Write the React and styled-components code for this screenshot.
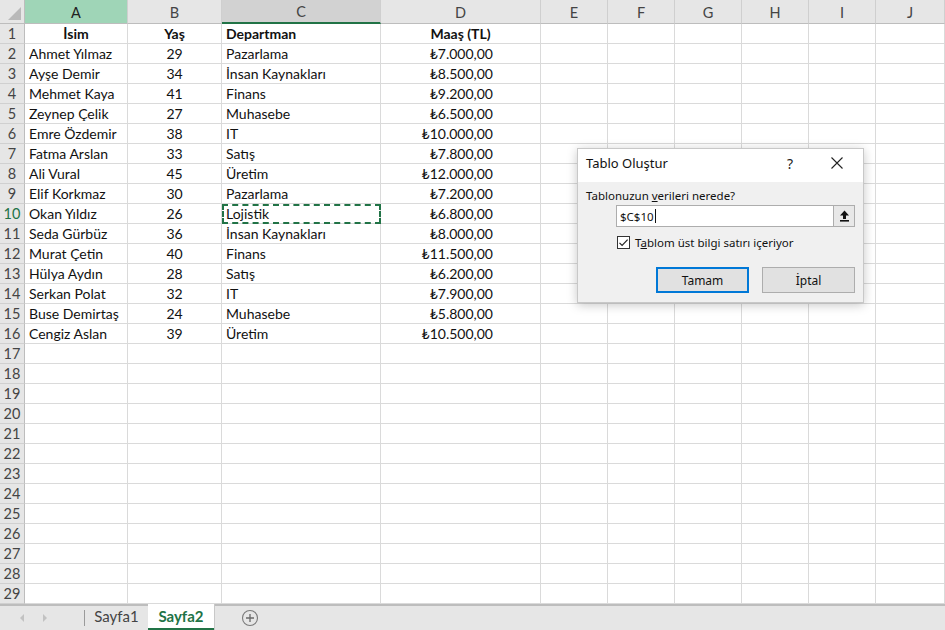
import React from 'react';
import styled, { createGlobalStyle, css } from 'styled-components';

const GlobalStyle = createGlobalStyle`
  html, body {
    margin: 0;
    padding: 0;
    overflow: hidden;
    background: #ffffff;
  }
  * {
    box-sizing: border-box;
  }
`;

const COLS = ['A', 'B', 'C', 'D', 'E', 'F', 'G', 'H', 'I', 'J'];

const rows = [
  ['İsim', 'Yaş', 'Departman', 'Maaş (TL)'],
  ['Ahmet Yılmaz', '29', 'Pazarlama', '₺7.000,00'],
  ['Ayşe Demir', '34', 'İnsan Kaynakları', '₺8.500,00'],
  ['Mehmet Kaya', '41', 'Finans', '₺9.200,00'],
  ['Zeynep Çelik', '27', 'Muhasebe', '₺6.500,00'],
  ['Emre Özdemir', '38', 'IT', '₺10.000,00'],
  ['Fatma Arslan', '33', 'Satış', '₺7.800,00'],
  ['Ali Vural', '45', 'Üretim', '₺12.000,00'],
  ['Elif Korkmaz', '30', 'Pazarlama', '₺7.200,00'],
  ['Okan Yıldız', '26', 'Lojistik', '₺6.800,00'],
  ['Seda Gürbüz', '36', 'İnsan Kaynakları', '₺8.000,00'],
  ['Murat Çetin', '40', 'Finans', '₺11.500,00'],
  ['Hülya Aydın', '28', 'Satış', '₺6.200,00'],
  ['Serkan Polat', '32', 'IT', '₺7.900,00'],
  ['Buse Demirtaş', '24', 'Muhasebe', '₺5.800,00'],
  ['Cengiz Aslan', '39', 'Üretim', '₺10.500,00'],
];

const TOTAL_ROWS = 29;

const App = () => {
  const body = [];
  for (let r = 1; r <= TOTAL_ROWS; r++) {
    const data = rows[r - 1] || [];
    body.push(
      <RowHead key={`h${r}`} active={r === 10}>
        {r}
      </RowHead>
    );
    COLS.forEach((c, i) => {
      const value = data[i] || '';
      const header = r === 1;
      let align = 'left';
      if (i === 1) align = 'center';
      if (i === 0 && header) align = 'center';
      if (i === 3) align = header ? 'center' : 'right';
      body.push(
        <Cell
          key={`${c}${r}`}
          align={align}
          bold={header}
          marked={r === 10 && c === 'C'}
        >
          {value}
        </Cell>
      );
    });
  }

  return (
    <>
      <GlobalStyle />
      <Window>
        <Sheet>
          <Corner>
            <CornerTriangle />
          </Corner>
          {COLS.map((c) => (
            <ColHead key={c} state={c === 'A' ? 'picked' : c === 'C' ? 'active' : ''}>
              {c}
            </ColHead>
          ))}
          {body}
        </Sheet>

        <TabBar>
          <NavArrows>
            <Arrow dir="left" />
            <Arrow dir="right" />
          </NavArrows>
          <TabDivider />
          <Tab>Sayfa1</Tab>
          <Tab active>Sayfa2</Tab>
          <AddSheet>
            <svg width="18" height="18" viewBox="0 0 18 18">
              <circle cx="9" cy="9" r="7.5" fill="none" stroke="#7a7a7a" strokeWidth="1.1" />
              <path d="M9 5v8M5 9h8" stroke="#6a6a6a" strokeWidth="1.3" />
            </svg>
          </AddSheet>
        </TabBar>

        <Dialog>
          <TitleBar>
            <Title>Tablo Oluştur</Title>
            <TitleActions>
              <Help>?</Help>
              <svg width="12" height="12" viewBox="0 0 12 12">
                <path d="M0.5 0.5l11 11M11.5 0.5l-11 11" stroke="#222" strokeWidth="1.1" />
              </svg>
            </TitleActions>
          </TitleBar>
          <DialogBody>
            <Label>
              Tablonuzun <u>v</u>erileri nerede?
            </Label>
            <RangeField>
              <RangeInput>
                $C$10<Caret />
              </RangeInput>
              <CollapseBtn>
                <svg width="11" height="12" viewBox="0 0 11 12">
                  <path d="M5.5 0.5L10 5.5H7V9H4V5.5H1z" fill="#111" />
                  <rect x="1" y="10" width="9" height="1.6" fill="#111" />
                </svg>
              </CollapseBtn>
            </RangeField>
            <CheckRow>
              <CheckBox>
                <svg width="11" height="11" viewBox="0 0 11 11">
                  <path d="M1.5 5.8l2.6 2.6L9.6 2.6" fill="none" stroke="#222" strokeWidth="1.2" />
                </svg>
              </CheckBox>
              <span>
                T<u>a</u>blom üst bilgi satırı içeriyor
              </span>
            </CheckRow>
            <ButtonRow>
              <DialogButton primary>Tamam</DialogButton>
              <DialogButton>İptal</DialogButton>
            </ButtonRow>
          </DialogBody>
        </Dialog>
      </Window>
    </>
  );
};

export default App;

const sheetFont = `'Lato', 'DejaVu Sans', sans-serif`;
const uiFont = `'Noto Sans', 'DejaVu Sans', sans-serif`;

const Window = styled.div`
  position: relative;
  width: 945px;
  height: 630px;
  overflow: hidden;
  display: flex;
  flex-direction: column;
  background: #ffffff;
`;

const Sheet = styled.div`
  display: grid;
  grid-template-columns: 25px 103px 94px 159px 160px 67px 67px 67px 67px 67px 69px;
  grid-template-rows: 24px;
  grid-auto-rows: 20px;
  font-family: ${sheetFont};
`;

const Corner = styled.div`
  position: relative;
  background: #e6e6e6;
  border-right: 1px solid #bdbdbd;
  border-bottom: 1px solid #bdbdbd;
`;

const CornerTriangle = styled.div`
  position: absolute;
  right: 3px;
  bottom: 3px;
  width: 0;
  height: 0;
  border-left: 13px solid transparent;
  border-bottom: 13px solid #b9b9b9;
`;

const ColHead = styled.div`
  display: flex;
  align-items: center;
  justify-content: center;
  background: #e6e6e6;
  color: #444;
  font-size: 14.5px;
  border-right: 1px solid #cfcfcf;
  border-bottom: 1px solid #bdbdbd;
  padding-top: 1px;
  ${({ state }) =>
    state === 'picked' &&
    css`
      background: #9fd5b7;
      color: #222;
    `}
  ${({ state }) =>
    state === 'active' &&
    css`
      background: #d2d2d2;
      border-bottom: 2px solid #217346;
    `}
`;

const RowHead = styled.div`
  display: flex;
  align-items: center;
  justify-content: center;
  background: #e6e6e6;
  color: ${({ active }) => (active ? '#217346' : '#444')};
  font-size: 14.5px;
  border-right: 1px solid #bdbdbd;
  border-bottom: 1px solid #d0d0d0;
`;

const Cell = styled.div`
  position: relative;
  display: flex;
  align-items: center;
  justify-content: ${({ align }) =>
    align === 'center' ? 'center' : align === 'right' ? 'flex-end' : 'flex-start'};
  padding: 0 ${({ align }) => (align === 'right' ? '47px' : '4px')} 0 4px;
  border-right: 1px solid #dadada;
  border-bottom: 1px solid #dadada;
  font-size: 14px;
  font-weight: ${({ bold }) => (bold ? 700 : 400)};
  color: #111;
  white-space: nowrap;
  ${({ marked }) =>
    marked &&
    css`
      outline: 2px dashed #217346;
      outline-offset: -2px;
    `}
`;

const TabBar = styled.div`
  flex: 1;
  display: flex;
  align-items: stretch;
  background: #e6e6e6;
  border-top: 2px solid #bdbdbd;
  font-family: ${sheetFont};
`;

const NavArrows = styled.div`
  display: flex;
  align-items: center;
  gap: 19px;
  padding-left: 20px;
  width: 84px;
`;

const Arrow = styled.span`
  width: 0;
  height: 0;
  border-top: 4px solid transparent;
  border-bottom: 4px solid transparent;
  ${({ dir }) =>
    dir === 'left'
      ? css`
          border-right: 4px solid #c2c2c2;
        `
      : css`
          border-left: 4px solid #c2c2c2;
        `}
`;

const TabDivider = styled.div`
  width: 1px;
  margin: 4px 0 4px;
  background: #9a9a9a;
`;

const Tab = styled.div`
  display: flex;
  align-items: center;
  justify-content: center;
  width: ${({ active }) => (active ? '66px' : '63px')};
  margin-top: -2px;
  font-size: 15px;
  color: ${({ active }) => (active ? '#217346' : '#444')};
  font-weight: ${({ active }) => (active ? 700 : 400)};
  background: ${({ active }) => (active ? '#ffffff' : 'transparent')};
  border-bottom: 2px solid ${({ active }) => (active ? '#217346' : 'transparent')};
  box-shadow: ${({ active }) => (active ? '1px 0 0 #c8c8c8' : 'none')};
`;

const AddSheet = styled.div`
  display: flex;
  align-items: center;
  padding-left: 27px;
`;

const Dialog = styled.div`
  position: absolute;
  left: 577px;
  top: 148px;
  width: 287px;
  height: 155px;
  display: flex;
  flex-direction: column;
  background: #f0f0f0;
  border: 1px solid #c8c8c8;
  box-shadow: 0 2px 10px rgba(0, 0, 0, 0.22);
  font-family: ${uiFont};
  color: #111;
`;

const TitleBar = styled.div`
  height: 33px;
  display: flex;
  align-items: center;
  justify-content: space-between;
  padding: 0 20px 5px 8px;
  background: #ffffff;
`;

const Title = styled.span`
  font-size: 13px;
`;

const TitleActions = styled.div`
  display: flex;
  align-items: center;
  gap: 38px;
`;

const Help = styled.span`
  font-size: 14px;
  color: #222;
`;

const DialogBody = styled.div`
  display: flex;
  flex-direction: column;
  padding: 6px 8px 0 8px;
  font-size: 11.5px;
`;

const Label = styled.div`
  line-height: 16px;
`;

const RangeField = styled.div`
  display: flex;
  margin: 1px 0 0 30px;
  height: 22px;
`;

const RangeInput = styled.div`
  flex: 1;
  display: flex;
  align-items: center;
  padding-left: 3px;
  background: #ffffff;
  border: 1px solid #adadad;
  border-right: none;
`;

const Caret = styled.span`
  display: inline-block;
  width: 1px;
  height: 14px;
  margin-left: 1px;
  background: #111;
`;

const CollapseBtn = styled.div`
  width: 22px;
  display: flex;
  align-items: center;
  justify-content: center;
  background: #e8e8e8;
  border: 1px solid #adadad;
`;

const CheckRow = styled.div`
  display: flex;
  align-items: center;
  gap: 5px;
  margin: 8px 0 0 31px;
`;

const CheckBox = styled.div`
  width: 13px;
  height: 13px;
  display: flex;
  align-items: center;
  justify-content: center;
  background: #ffffff;
  border: 1px solid #333;
`;

const ButtonRow = styled.div`
  display: flex;
  justify-content: flex-end;
  gap: 13px;
  margin-top: 17px;
`;

const DialogButton = styled.div`
  width: 93px;
  height: 26px;
  display: flex;
  align-items: center;
  justify-content: center;
  font-size: 12px;
  background: #e1e1e1;
  border: 1px solid ${({ primary }) => (primary ? '#0078d7' : '#adadad')};
  box-shadow: ${({ primary }) => (primary ? 'inset 0 0 0 1px #0078d7' : 'none')};
`;
